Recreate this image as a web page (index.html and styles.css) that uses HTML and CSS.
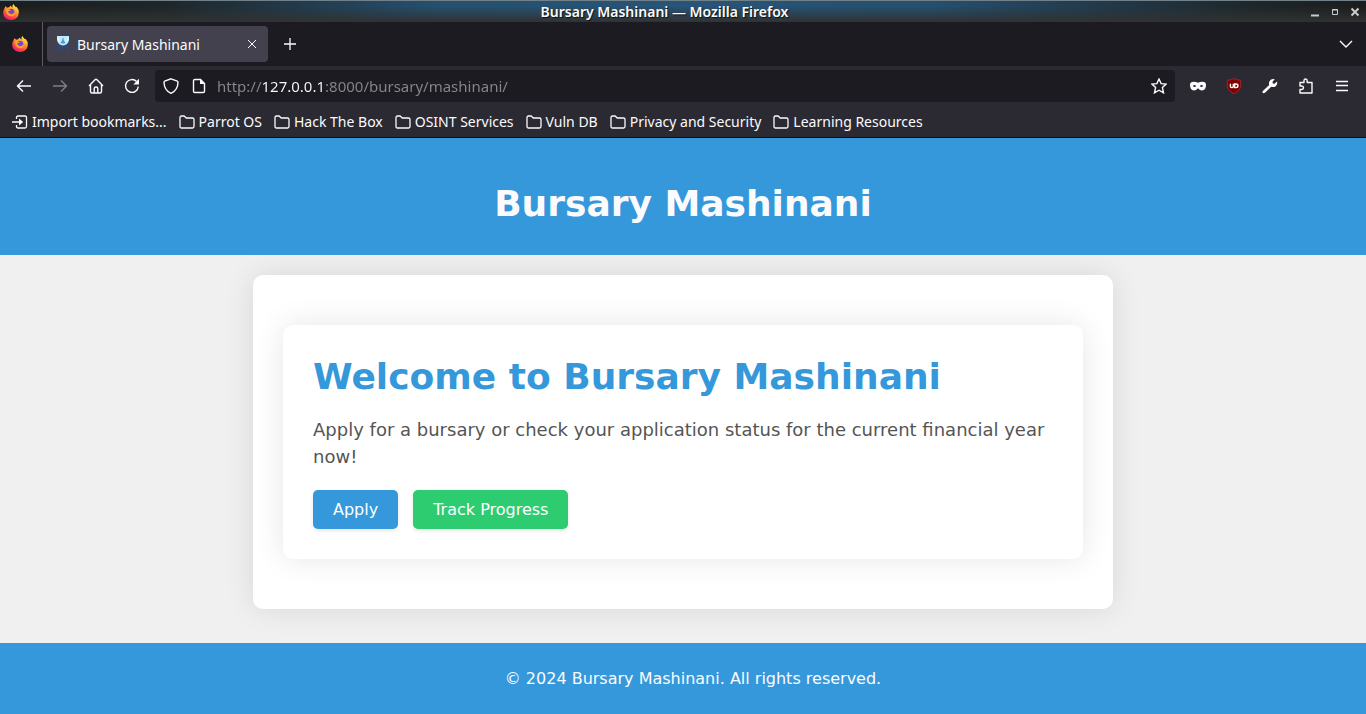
FILE: index.html
```html
<!DOCTYPE html>
<html lang="en">
<head>
<meta charset="utf-8">
<title>Bursary Mashinani</title>
<link rel="stylesheet" href="styles.css">
</head>
<body>
<svg class="defs" aria-hidden="true">
  <defs>
    <linearGradient id="flame" x1="0.8" y1="0" x2="0.3" y2="1">
      <stop offset="0" stop-color="#fff44f"/><stop offset="0.35" stop-color="#ffb02a"/>
      <stop offset="0.65" stop-color="#ff5a36"/><stop offset="1" stop-color="#f0147a"/>
    </linearGradient>
    <symbol id="firefox" viewBox="0 0 16 16">
      <path fill="url(#flame)" d="M2.6 2.2 4.2 3.8Q5 3.2 6.4 3.3 6.8 2.1 8 1.6 8 3 9.4 3.7 9 1.4 10.6 0 11.2 2 13 3.2L13.5 2.8Q16 5.4 15.8 8.8A7.8 7.2 0 0 1 .2 8.8Q0 6 1.6 4.2 1.8 3 2.6 2.2Z"/>
      <circle cx="8" cy="8.2" r="3.4" fill="#7542e5"/>
      <path fill="#ffa02c" d="M3.2 5.2Q6 4.2 7.8 6.6 6 7.4 5 7.2 5.4 9 7 9.8 10 11 11 8.3 12.6 9 11 11.4 8 13.4 5 11.2 2.6 9 3.2 5.2Z"/>
    </symbol>
    <symbol id="folder" viewBox="0 0 16 16">
      <path fill="none" stroke="currentColor" stroke-width="1.3" stroke-linejoin="round" d="M1 12.5V3.5Q1 2 2.5 2H5.2L7.2 4H13.5Q15 4 15 5.5V12.5Q15 14 13.5 14H2.5Q1 14 1 12.5Z"/>
    </symbol>
  </defs>
</svg>

<div class="titlebar">
  <svg class="icon"><use href="#firefox"/></svg>
  <span class="window-title">Bursary Mashinani — Mozilla Firefox</span>
  <div class="window-controls">
    <button aria-label="Minimize"><svg viewBox="0 0 10 10"><path d="M1 8.5H9" stroke-width="2"/></svg></button>
    <button aria-label="Maximize"><svg viewBox="0 0 10 10"><path d="M2.5 2.5H7.5V7.5H2.5ZM2 3H8"/></svg></button>
    <button aria-label="Close window"><svg viewBox="0 0 10 10"><path d="M1.5 1.5 8.5 8.5M8.5 1.5 1.5 8.5" stroke-width="2"/></svg></button>
  </div>
</div>

<div class="tabstrip">
  <button class="view-button" aria-label="Firefox View"><svg class="icon"><use href="#firefox"/></svg></button>
  <div class="tab">
    <svg class="favicon" viewBox="0 0 16 16"><path fill="#b9eefa" d="M2 0H14V4Q13 9 8 9.5 3 9 2 4Z"/><path fill="#5b92d0" d="M7.4 2H8.6V4L10.5 7Q8 8.2 5.5 7L7.4 4Z"/><path fill="none" stroke="#fff" stroke-width=".8" d="M3 1 4 6M13 1 12 6"/><path fill="#27498f" d="M1 11Q4 9 8 11.2 12 9 15 11L14 12.5Q11 11 8 13 5 11 2 12.5ZM0 13.5Q3 11.5 5 13.5L4 14.5H1ZM16 13.5Q13 11.5 11 13.5L12 14.5H15Z"/></svg>
    <span class="tab-title">Bursary Mashinani</span>
    <button class="tab-close" aria-label="Close tab"><svg viewBox="0 0 10 10"><path d="M1 1 9 9M9 1 1 9"/></svg></button>
  </div>
  <button class="tool" aria-label="New tab"><svg viewBox="0 0 16 16"><path d="M8 2V14M2 8H14" stroke-width="1.3"/></svg></button>
  <button class="tool tab-list" aria-label="List all tabs"><svg viewBox="0 0 16 16"><path d="M2 5 8 11 14 5"/></svg></button>
</div>

<div class="navbar">
  <button class="tool" aria-label="Back"><svg viewBox="0 0 16 16"><path d="M15 8H1.5M7 2.5 1.5 8 7 13.5"/></svg></button>
  <button class="tool" aria-label="Forward" disabled><svg viewBox="0 0 16 16"><path d="M1 8H14.5M9 2.5 14.5 8 9 13.5"/></svg></button>
  <button class="tool" aria-label="Home"><svg viewBox="0 0 16 16"><path d="M1 8 7.2 1.6Q8 .9 8.8 1.6L15 8M2.5 7V13.5Q2.5 15 4 15H12Q13.5 15 13.5 13.5V7M6.2 15V10.5Q6.2 9 8 9T9.8 10.5V15"/></svg></button>
  <button class="tool" aria-label="Reload"><svg viewBox="0 0 16 16"><path d="M14.3 8.5A6.4 6.4 0 1 1 12.6 3.6"/><path class="solid" d="M15 .8V6.5H9.3Z"/></svg></button>
  <div class="urlbar">
    <button aria-label="Tracking protection"><svg viewBox="0 0 16 16"><path d="M8 .8 14.3 3.2Q15 3.5 15 4.2 14.8 12.3 8 15.3 1.2 12.3 1 4.2 1 3.5 1.7 3.2Z"/></svg></button>
    <button aria-label="Site information"><svg viewBox="0 0 16 16"><path d="M4 1.5H9.5L13.5 5.5V13.2Q13.5 14.5 12.2 14.5H3.8Q2.5 14.5 2.5 13.2V2.8Q2.5 1.5 4 1.5Z"/><path class="solid" d="M9 1V6H14Z"/></svg></button>
    <input class="url" type="text" aria-label="Address" value="http://127.0.0.1:8000/bursary/mashinani/">
    <button aria-label="Bookmark this page"><svg viewBox="0 0 16 16"><path d="M8 1 10.1 5.6 15.1 6.1 11.4 9.6 12.5 14.8 8 12.2 3.5 14.8 4.6 9.6.9 6.1 5.9 5.6Z"/></svg></button>
  </div>
  <button class="tool" aria-label="Mask extension"><svg viewBox="0 0 16 16"><path class="solid" fill-rule="evenodd" d="M0 7Q0 3.8 3.8 3.8 6 3.8 8 4.8 10 3.8 12.2 3.8 16 3.8 16 7 16 12.4 12 12.4 10 12.4 8 10.2 6 12.4 4 12.4 0 12.4 0 7ZM2.8 8Q4.5 10.2 6.2 8 4.5 6 2.8 8ZM9.8 8Q11.5 10.2 13.2 8 11.5 6 9.8 8Z"/></svg></button>
  <button class="tool" aria-label="uBlock Origin"><svg viewBox="0 0 16 16"><path class="shield" d="M8 .5Q11 2.3 14.7 2.3V9Q14 13 8 15.8 2 13 1.3 9V2.3Q5 2.3 8 .5Z"/><path d="M4.4 5.8V8.6Q4.4 9.6 5.8 9.6T7.3 8.6V5.8M8.7 6H10Q12 6 12 7.8T10 9.6H8.7Z"/></svg></button>
  <button class="tool" aria-label="Developer tools"><svg viewBox="0 0 16 16"><path class="solid" d="M1.1 12.8 7.2 7Q6.3 4 8.5 2 10.3.4 12.8 1.2L10.5 3.7 10.8 5.5 12.5 5.8 15 3.5Q15.8 6 14 7.9 12 9.7 9.2 8.8L3 14.8Q1.5 15.7.6 14.8.1 14 1.1 12.8Z"/></svg></button>
  <button class="tool" aria-label="Extensions"><svg viewBox="0 0 16 16"><path d="M2 4.5H6V2.8Q6 1 7.6 1T9.2 2.8V4.5H14V15H2V11.5H3.7Q5.5 11.5 5.5 9.8T3.7 8H2Z" stroke-linejoin="round"/></svg></button>
  <button class="tool" aria-label="Open application menu"><svg viewBox="0 0 16 16"><path d="M2 3.5H14M2 7.5H14M2 12.5H14"/></svg></button>
</div>

<nav class="bookmarks" aria-label="Bookmarks">
  <a href="#"><svg class="icon" viewBox="0 0 16 16"><path fill="none" stroke="currentColor" stroke-width="1.3" d="M4.5 5V3.5Q4.5 2 6 2H13Q14.5 2 14.5 3.5V12.5Q14.5 14 13 14H6Q4.5 14 4.5 12.5V11M0 8H9"/><path fill="currentColor" d="M7 4.5 11.2 8 7 11.5Z"/></svg>Import bookmarks...</a>
  <a href="#"><svg class="icon"><use href="#folder"/></svg>Parrot OS</a>
  <a href="#"><svg class="icon"><use href="#folder"/></svg>Hack The Box</a>
  <a href="#"><svg class="icon"><use href="#folder"/></svg>OSINT Services</a>
  <a href="#"><svg class="icon"><use href="#folder"/></svg>Vuln DB</a>
  <a href="#"><svg class="icon"><use href="#folder"/></svg>Privacy and Security</a>
  <a href="#"><svg class="icon"><use href="#folder"/></svg>Learning Resources</a>
</nav>

<div class="page">
  <header class="site-header"><h1>Bursary Mashinani</h1></header>
  <main>
    <div class="container">
      <section class="welcome">
        <h2>Welcome to Bursary Mashinani</h2>
        <p>Apply for a bursary or check your application status for the current financial year now!</p>
        <div class="actions">
          <button class="apply">Apply</button>
          <button class="track">Track Progress</button>
        </div>
      </section>
    </div>
  </main>
  <footer>© 2024 Bursary Mashinani. All rights reserved.</footer>
</div>
</body>
</html>
```
FILE: styles.css
```css
* { box-sizing: border-box; }
body {
  margin: 0;
  min-height: 100vh;
  display: flex;
  flex-direction: column;
  font-family: "Noto Sans", sans-serif;
  font-size: 14px;
  color: #fbfbfe;
}
button {
  border: 0;
  padding: 0;
  background: none;
  color: inherit;
  font: inherit;
}
.defs { position: absolute; width: 0; height: 0; }
.icon { width: 16px; height: 16px; flex: none; }
button svg { display: block; fill: none; stroke: currentColor; stroke-width: 1.4; }
button .icon { stroke: none; }
button .solid { fill: currentColor; stroke: none; }

.titlebar {
  display: flex;
  align-items: center;
  height: 22px;
  padding: 0 6px 0 3px;
  border-top: 1px solid #71818a;
  background:
    linear-gradient(to bottom, rgba(45, 45, 45, 0) 25%, #303232 100%),
    linear-gradient(to right, #1b1d1c 0%, #1e2629 12%, #25506f 32%, #285477 50%, #25506f 68%, #1e2629 92%, #1b1d1c 100%);
}
.window-title {
  flex: 1;
  text-align: center;
  font-weight: 600;
  line-height: 20px;
  text-shadow: 1px 1px 1px #111;
}
.window-controls { display: flex; gap: 10px; color: #c9cbcb; }
.window-controls svg { width: 10px; height: 10px; stroke-width: 1; }

.tabstrip {
  display: flex;
  align-items: center;
  height: 44px;
  background: #1c1b22;
}
.view-button {
  display: grid;
  place-items: center;
  align-self: stretch;
  width: 43px;
  padding-right: 3px;
  border-right: 1px solid #5b5a61;
}
.tab {
  display: flex;
  align-items: center;
  width: 221px;
  height: 36px;
  margin: 0 4px;
  padding: 0 11px 0 8px;
  border-radius: 4px;
  background: #42414d;
}
.favicon { width: 16px; height: 16px; margin-right: 6px; }
.tab-title { flex: 1; }
.tab-close svg { width: 10px; height: 10px; stroke-width: 1; }
.tool { display: grid; place-items: center; width: 36px; height: 32px; flex: none; }
.tool svg { width: 16px; height: 16px; }
.tool:disabled { opacity: 0.4; }
.tab-list { margin-left: auto; margin-right: 2px; }

.navbar {
  display: flex;
  align-items: center;
  height: 40px;
  padding: 0 6px;
  background: #2b2a33;
}
.urlbar {
  display: flex;
  align-items: center;
  flex: 1;
  gap: 12px;
  height: 32px;
  margin: 0 5px;
  padding: 0 8px;
  border-radius: 4px;
  background: #1c1b22;
}
.urlbar svg { width: 16px; height: 16px; }
.url {
  flex: 1;
  min-width: 0;
  margin-left: -2px;
  padding: 0;
  border: 0;
  outline: 0;
  font: inherit;
  font-size: 15px;
  line-height: 24px;
  color: transparent;
  background: linear-gradient(to right, #87868c 45px, #fbfbfe 45px 108px, #87868c 108px);
  -webkit-background-clip: text;
  background-clip: text;
}
.shield { fill: #800000; stroke: #9b2430; stroke-width: 1; }

.bookmarks {
  display: flex;
  align-items: center;
  gap: 12px;
  height: 32px;
  padding: 0 12px;
  border-bottom: 1px solid #0c0c0d;
  background: #2b2a33;
}
.bookmarks a {
  display: flex;
  align-items: center;
  gap: 4px;
  color: inherit;
  text-decoration: none;
  white-space: nowrap;
}

.page {
  flex: 1;
  display: flex;
  flex-direction: column;
  font-family: "DejaVu Sans", sans-serif;
  background: #f0f0f0;
}
h1, h2, p { margin: 0; }
h1, h2 { font-size: 36px; line-height: 42px; font-weight: 700; }
.site-header { padding: 45px 20px 30px; text-align: center; background: #3498db; }
main { flex: 1; padding: 20px; }
.container {
  max-width: 860px;
  margin: 0 auto;
  padding: 50px 30px;
  border-radius: 10px;
  background: #fff;
  box-shadow: 0 0 30px rgba(0, 0, 0, 0.1);
}
.welcome {
  padding: 30px;
  border-radius: 10px;
  background: #fff;
  box-shadow: 0 0 30px rgba(0, 0, 0, 0.1);
}
.welcome h2 { line-height: 44px; color: #3498db; }
.welcome p { margin: 17px 0 20px; font-size: 18px; line-height: 27px; color: #555; }
.actions { display: flex; gap: 15px; }
.actions button {
  padding: 10px 20px;
  border-radius: 5px;
  font-size: 16px;
  line-height: 19px;
  color: #fff;
  box-shadow: 0 2px 4px rgba(0, 0, 0, 0.1);
}
.actions .apply { background: #3498db; }
.actions .track { background: #2ecc71; }
.site-header, footer { position: relative; }
footer {
  padding: 26px 20px 26px 40px;
  font-size: 16px;
  line-height: 19px;
  text-align: center;
  background: #3498db;
}
```
